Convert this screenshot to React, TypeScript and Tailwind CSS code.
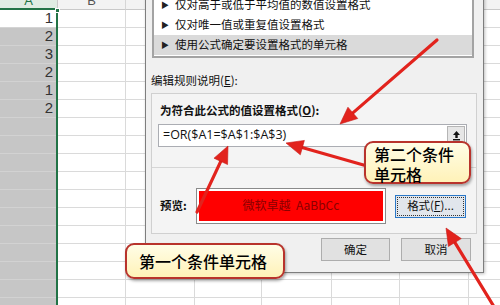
import React from "react";

const cols = [58, 68, 69, 67, 70, 68, 69, 40];
const values = ["1", "2", "3", "2", "1", "2"];
const ROWS = 17;

function Arrow({ x1, y1, x2, y2 }: { x1: number; y1: number; x2: number; y2: number }) {
  const dx = x2 - x1;
  const dy = y2 - y1;
  const len = Math.hypot(dx, dy);
  const ux = dx / len;
  const uy = dy / len;
  const hl = 17;
  const hw = 7.5;
  const bx = x2 - ux * hl;
  const by = y2 - uy * hl;
  const px = -uy;
  const py = ux;
  const pts = `${x2},${y2} ${bx + px * hw},${by + py * hw} ${bx - px * hw},${by - py * hw}`;
  return (
    <g>
      <line x1={x1} y1={y1} x2={bx + ux * 3} y2={by + uy * 3} stroke="#e2231d" strokeWidth={3.2} strokeLinecap="round" />
      <polygon points={pts} fill="#e2231d" stroke="#c81a15" strokeWidth={0.6} strokeLinejoin="round" />
    </g>
  );
}

function Sheet() {
  return (
    <div className="flex flex-col" style={{ fontFamily: '"Liberation Sans", Arial, sans-serif' }}>
      <div className="flex h-[10px] overflow-hidden">
        {cols.map((w, i) => (
          <div
            key={i}
            style={{ width: w }}
            className={
              i === 0
                ? "shrink-0 h-[10px] bg-[#dfece3] border-b-2 border-b-[#217346] border-r border-r-[#c9c9c9] flex justify-center"
                : "shrink-0 h-[10px] bg-[#f3f3f3] border-b border-b-[#c9c9c9] border-r border-r-[#d6d6d6] flex justify-center"
            }
          >
            <span className={i === 0 ? "text-[13px] leading-[14px] -mt-[6px] text-[#217346]" : "text-[13px] leading-[14px] -mt-[6px] text-[#555]"}>
              {i === 0 ? "A" : i === 1 ? "B" : ""}
            </span>
          </div>
        ))}
      </div>
      {Array.from({ length: ROWS }).map((_, r) => (
        <div key={r} className="flex h-[18px]">
          {cols.map((w, i) => {
            if (i === 0) {
              return (
                <div
                  key={i}
                  style={{ width: w }}
                  className={
                    r === 0
                      ? "shrink-0 h-[18px] bg-white border-b border-b-[#d4d4d4] flex items-center justify-end pr-[5px] text-[15px] text-[#333]"
                      : "shrink-0 h-[18px] bg-[#c6c6c6] border-b border-b-[#d2d2d2] flex items-center justify-end pr-[5px] text-[15px] text-[#333]"
                  }
                >
                  {values[r] ?? ""}
                </div>
              );
            }
            return <div key={i} style={{ width: w }} className="shrink-0 h-[18px] border-b border-r border-[#dadada] bg-white" />;
          })}
        </div>
      ))}
    </div>
  );
}

function Btn({ children, className = "" }: { children: React.ReactNode; className?: string }) {
  return (
    <div className={"h-[23px] flex items-center justify-center bg-[#e1e1e1] border border-[#adadad] text-[11.5px] text-[#111] " + className}>
      {children}
    </div>
  );
}

function Dialog() {
  const items = ["仅对高于或低于平均值的数值设置格式", "仅对唯一值或重复值设置格式", "使用公式确定要设置格式的单元格"];
  return (
    <div
      className="absolute left-[145px] top-[-12px] w-[339px] h-[285px] bg-[#f0f0f0] border border-[#7e7e7e] shadow-[1px_1px_3px_rgba(0,0,0,0.25)] flex flex-col pt-[3px] text-[#111]"
      style={{ fontFamily: '"Noto Sans CJK SC", "Liberation Sans", sans-serif' }}
    >
      <div className="ml-[6px] w-[322px] border-2 border-[#a3a3a3] bg-white pt-[1px] pb-[1px] flex flex-col">
        {items.map((t, i) => (
          <div key={i} className={"h-[20px] flex items-center text-[11.5px] " + (i === 2 ? "bg-[#dadada]" : "")}>
            <span className="w-[21px] pl-[7px] text-[8px] text-[#222]">▶</span>
            <span>{t}</span>
          </div>
        ))}
      </div>
      <div className="ml-[5px] mt-[14px] h-[16px] leading-[16px] text-[11.5px]">
        编辑规则说明(<span className="underline">E</span>):
      </div>
      <div className="ml-[5px] mt-[5px] w-[326px] h-[141px] border border-[#d0d0d0] bg-[#f4f4f4] flex flex-col pt-[8px] pl-[6px]">
        <div className="ml-[2px] h-[16px] leading-[16px] text-[11.5px] font-bold">
          为符合此公式的值设置格式(<span className="underline">O</span>):
        </div>
        <div className="mt-[6px] w-[309px] h-[23px] bg-white border border-[#abadb3] flex items-center justify-between pl-[4px] pr-[1px]">
          <span className="text-[12.5px] text-[#111]" style={{ fontFamily: '"Open Sans", "Liberation Sans", sans-serif' }}>
            =OR($A1=$A$1:$A$3)
          </span>
          <div className="w-[18px] h-[19px] bg-[#e6e6e6] border border-[#b5b5b5] flex items-center justify-center">
            <svg width="9" height="11" viewBox="0 0 9 11">
              <path d="M4.5 1 L8 5 H5.7 V8 H3.3 V5 H1 Z" fill="#111" />
              <rect x="1" y="9" width="7" height="1.4" fill="#111" />
            </svg>
          </div>
        </div>
        <div className="mt-[20px] -ml-[6px] w-[324px] border-t border-[#d6d6d6]" />
        <div className="mt-[20px] flex items-center">
          <div className="ml-[2px] w-[36px] text-[11.5px] font-bold">预览:</div>
          <div className="w-[190px] h-[36px] border border-[#8a8a8a] bg-white p-[2px]">
            <div className="w-full h-full bg-[#ff0000] flex items-center justify-center text-[12px] text-[#8a0000] pb-[2px]">
              微软卓越&nbsp;&nbsp;AaBbCc
            </div>
          </div>
          <div className="ml-[9px] w-[71px] h-[23px] border border-[#2a78c8] bg-[#e1e6ec] p-[1px]">
            <div className="w-full h-full border border-dotted border-[#333] flex items-center justify-center text-[11.5px]">
              格式(<span className="underline">F</span>)...
            </div>
          </div>
        </div>
      </div>
      <div className="mt-[4px] flex justify-end gap-[11px] pr-[12px]">
        <Btn className="w-[69px]">确定</Btn>
        <Btn className="w-[70px]">取消</Btn>
      </div>
    </div>
  );
}

function Callout({ className, children }: { className: string; children: React.ReactNode }) {
  return (
    <div
      className={
        "absolute rounded-[9px] border-2 border-[#b8332c] bg-gradient-to-b from-[#fffde6] to-[#fff2b8] shadow-[1px_2px_3px_rgba(0,0,0,0.35)] text-[16px] font-medium text-black " +
        className
      }
      style={{ fontFamily: '"Noto Sans CJK SC", sans-serif' }}
    >
      {children}
    </div>
  );
}

export default function App() {
  return (
    <div className="relative w-[500px] h-[305px] overflow-hidden bg-white">
      <Sheet />
      <div className="absolute left-[56px] top-[9px] w-[2px] h-[300px] bg-[#217346]" />
      <div className="absolute left-[55px] top-[8px] w-[5px] h-[5px] bg-[#217346] border border-white" />
      <Dialog />
      <svg className="absolute left-0 top-0 pointer-events-none" width="500" height="305" viewBox="0 0 500 305">
        <Arrow x1={437} y1={40} x2={340} y2={124} />
        <Arrow x1={367} y1={166} x2={286} y2={143} />
        <Arrow x1={197} y1={212} x2={228} y2={146} />
        <Arrow x1={496} y1={310} x2={446} y2={228} />
      </svg>
      <Callout className="left-[364px] top-[141px] w-[107px] h-[43px] pl-[8px] pt-[1px] flex flex-col">
        <div className="h-[20px] leading-[20px]">第二个条件</div>
        <div className="h-[20px] leading-[20px]">单元格</div>
      </Callout>
      <Callout className="left-[125px] top-[243px] w-[160px] h-[36px] flex items-center pl-[12px]">
        第一个条件单元格
      </Callout>
    </div>
  );
}
